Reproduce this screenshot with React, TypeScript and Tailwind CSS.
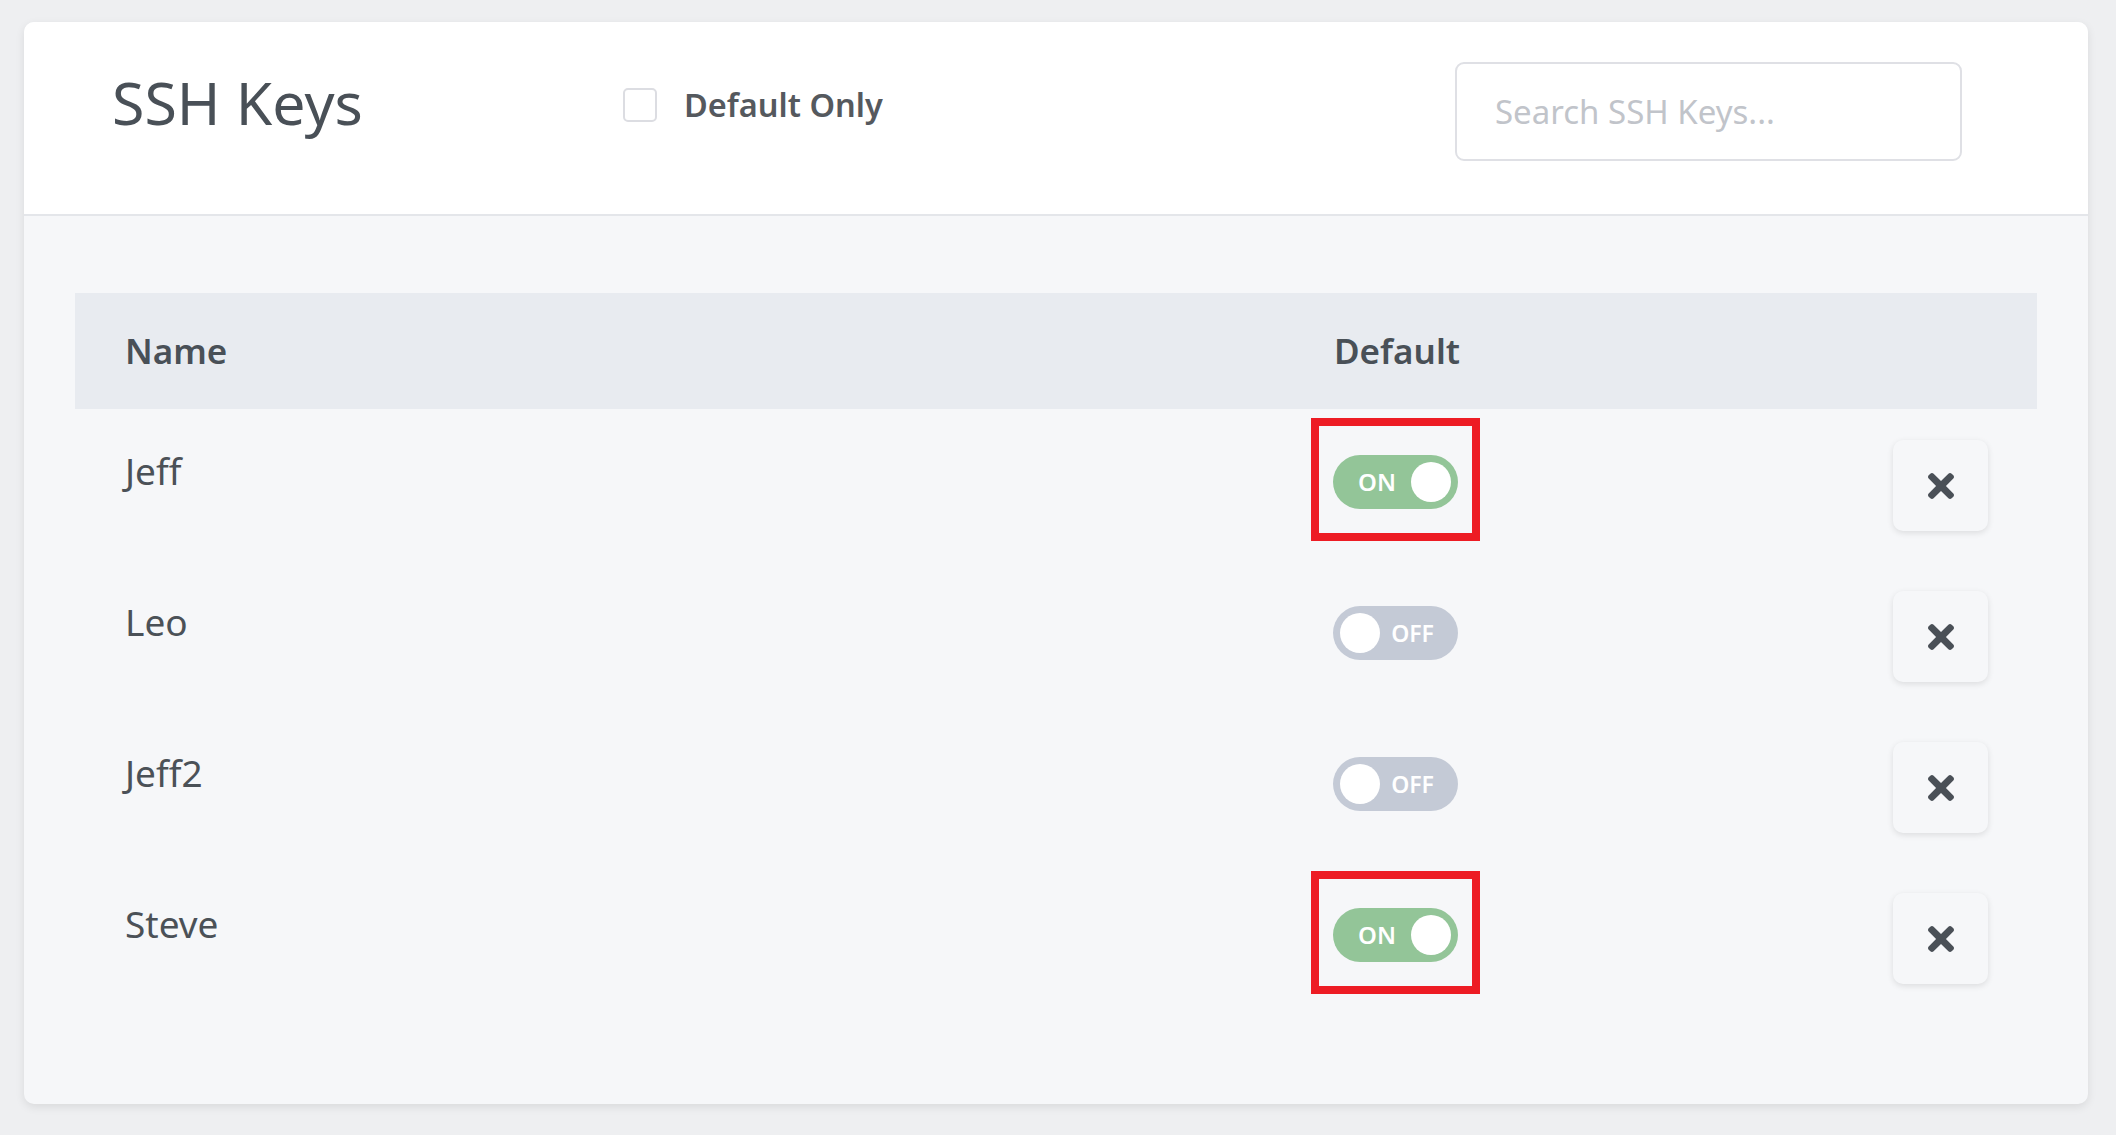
import React from "react";

type Row = { name: string; on: boolean; highlight: boolean };

const rows: Row[] = [
  { name: "Jeff", on: true, highlight: true },
  { name: "Leo", on: false, highlight: false },
  { name: "Jeff2", on: false, highlight: false },
  { name: "Steve", on: true, highlight: true },
];

function Toggle({ on }: { on: boolean }) {
  if (on) {
    return (
      <div className="flex h-[54px] w-[125px] items-center justify-between rounded-full bg-[#93c598] pl-[25px] pr-[7px]">
        <span className="text-[24px] font-semibold leading-none text-white">ON</span>
        <span className="h-[40px] w-[40px] rounded-full bg-white" />
      </div>
    );
  }
  return (
    <div className="flex h-[54px] w-[125px] items-center justify-between rounded-full bg-[#c4cad6] pl-[7px] pr-[24px]">
      <span className="h-[40px] w-[40px] rounded-full bg-white" />
      <span className="text-[23px] font-semibold leading-none text-white">OFF</span>
    </div>
  );
}

function TimesIcon() {
  return (
    <svg width="26" height="26" viewBox="0 80 352 352" fill="#4a5057">
      <path d="M242.72 256l100.07-100.07c12.28-12.28 12.28-32.19 0-44.48l-22.24-22.24c-12.28-12.28-32.19-12.28-44.48 0L176 189.28 75.93 89.21c-12.28-12.28-32.19-12.28-44.48 0L9.21 111.45c-12.28 12.28-12.28 32.19 0 44.48L109.28 256 9.21 356.07c-12.28 12.28-12.28 32.19 0 44.48l22.24 22.240c12.28 12.28 32.2 12.28 44.48 0L176 322.72l100.07 100.07c12.28 12.28 32.2 12.28 44.48 0l22.24-22.24c12.28-12.28 12.28-32.19 0-44.48L242.72 256z" />
    </svg>
  );
}

export default function App() {
  return (
    <div
      className="min-h-screen w-full bg-[#eeeff1] pt-[22px]"
      style={{ fontFamily: '"Noto Sans", "Open Sans", sans-serif' }}
    >
      <div className="ml-[24px] flex h-[1082px] w-[2064px] flex-col rounded-[10px] bg-[#f6f7f9] shadow-[0_3px_10px_rgba(0,0,0,0.09)]">
        {/* Header */}
        <div className="flex h-[194px] items-start rounded-t-[10px] border-b-2 border-[#e4e6ea] bg-white">
          <div className="ml-[88px] mt-[51px] w-[511px] text-[59px] leading-[59px] text-[#495057]">
            SSH Keys
          </div>
          <label className="mt-[66px] flex h-[34px] items-center gap-[27px]">
            <span className="h-[34px] w-[34px] rounded-[5px] border-2 border-[#dcdde2] bg-white" />
            <span className="text-[32.5px] font-semibold leading-[34px] text-[#55595e]">Default Only</span>
          </label>
          <div className="ml-auto mr-[126px] mt-[40px] flex h-[99px] w-[507px] items-center rounded-[9px] border-2 border-[#dfe0e5] bg-white pl-[38px]">
            <input
              className="w-full bg-transparent text-[33px] text-[#495057] outline-none placeholder:text-[#c1c4ca]"
              placeholder="Search SSH Keys..."
              style={{ fontFamily: '"Noto Sans", "Open Sans", sans-serif' }}
            />
          </div>
        </div>

        {/* Body */}
        <div className="px-[51px] pt-[77px]">
          <div className="flex h-[116px] items-center bg-[#e8ebf0] text-[35px] font-semibold text-[#495057]">
            <div className="w-[1210px] pl-[50px]">Name</div>
            <div className="w-[558px] pl-[49px]">Default</div>
            <div className="flex-1" />
          </div>

          {rows.map((r) => (
            <div key={r.name} className="flex h-[151px] items-start">
              <div className="w-[1210px] pl-[50px] pt-[40px] text-[37px] leading-[44px] text-[#4b5157]">
                {r.name}
              </div>
              <div className="w-[558px] pl-[48px] pt-[46px]">
                <div className="relative w-[125px]">
                  <Toggle on={r.on} />
                  {r.highlight && (
                    <span className="pointer-events-none absolute -bottom-[32px] -left-[22px] -right-[22px] -top-[37px] border-[8px] border-[#ed1c24]" />
                  )}
                </div>
              </div>
              <div className="flex flex-1 justify-end pr-[49px] pt-[31px]">
                <button className="flex h-[91px] w-[95px] items-center justify-center rounded-[10px] bg-[#f6f7f9] shadow-[0_2px_6px_rgba(0,0,0,0.11)]">
                  <TimesIcon />
                </button>
              </div>
            </div>
          ))}
        </div>
      </div>
    </div>
  );
}
